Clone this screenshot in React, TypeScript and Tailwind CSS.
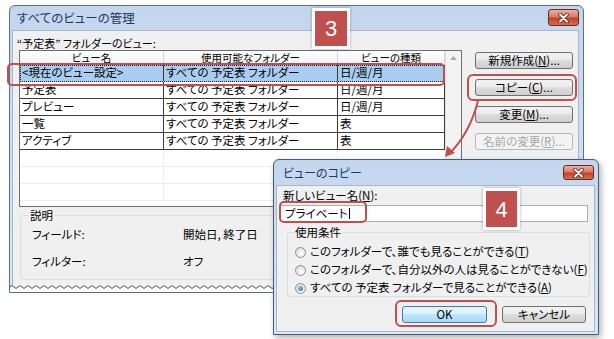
import React from 'react';

const font = "font-['Noto_Sans_CJK_JP','Noto_Sans',sans-serif] [font-feature-settings:'palt']";

const wavePath = (() => {
  let d = 'M0,4';
  for (let x = 0; x < 584; x += 8) d += ' q2,-3 4,0 q2,3 4,0';
  return d;
})();

function CloseBtn({ className }: { className: string }) {
  return (
    <div
      className={`flex items-center justify-center rounded-[3px] border border-[#6b2a1f] bg-[linear-gradient(#eab0a2_0%,#da7a62_45%,#c3422b_55%,#d56e50_100%)] ${className}`}
    >
      <svg width="13" height="10" viewBox="0 0 13 10">
        <path d="M3 1.5 L10 8.5 M10 1.5 L3 8.5" stroke="#5b2219" strokeWidth="3.6" strokeLinecap="round" />
        <path d="M3 1.5 L10 8.5 M10 1.5 L3 8.5" stroke="#fff" strokeWidth="2" strokeLinecap="round" />
      </svg>
    </div>
  );
}

function Btn({
  children,
  kind = 'normal',
  className = '',
}: {
  children: React.ReactNode;
  kind?: 'normal' | 'disabled' | 'primary';
  className?: string;
}) {
  const look =
    kind === 'disabled'
      ? 'border-[#b5b9bd] bg-[#f4f4f4] text-[#a6a6a6]'
      : kind === 'primary'
        ? 'border-[#3c7fb1] bg-[linear-gradient(#eaf6fd_0%,#d9f0fc_50%,#bee6fd_50%,#a7d9f5_100%)] text-black'
        : 'border-[#707070] bg-[linear-gradient(#f2f2f2_0%,#ebebeb_50%,#dddddd_50%,#cfcfcf_100%)] text-black';
  return (
    <div className={`flex h-[17px] items-center justify-center rounded-[3px] border text-[11.5px] leading-none ${look} ${className}`}>
      {children}
    </div>
  );
}

function Radio({ checked, children }: { checked?: boolean; children: React.ReactNode }) {
  return (
    <div className="flex h-[14px] items-center gap-[4px]">
      <div className="flex h-[11px] w-[11px] items-center justify-center rounded-full border border-[#8e8f8f] bg-[radial-gradient(circle_at_60%_65%,#ffffff,#d4d4d4)]">
        {checked && <div className="h-[5px] w-[5px] rounded-full bg-[radial-gradient(circle_at_40%_35%,#7fd0f7,#1a5a9e)]" />}
      </div>
      <span className="text-[11.5px] leading-none">{children}</span>
    </div>
  );
}

const rows = [
  { name: '<現在のビュー設定>', folder: 'すべての 予定表 フォルダー', type: '日/週/月', sel: true },
  { name: '予定表', folder: 'すべての 予定表 フォルダー', type: '日/週/月' },
  { name: 'プレビュー', folder: 'すべての 予定表 フォルダー', type: '日/週/月' },
  { name: '一覧', folder: 'すべての 予定表 フォルダー', type: '表' },
  { name: 'アクティブ', folder: 'すべての 予定表 フォルダー', type: '表' },
];

export default function App() {
  return (
    <div className={`relative h-[339px] w-[614px] overflow-hidden bg-white text-black ${font}`}>
      {/* Main dialog */}
      <div className="absolute left-[9px] top-[5px] flex h-[288px] w-[575px] flex-col overflow-hidden rounded-t-[6px] border border-[#5b6f8c] bg-[linear-gradient(#c3d6ee,#dae7f6)]">
        <div className="relative flex h-[24px] shrink-0 items-center pl-[7px]">
          <span className="text-[12.5px] text-[#1e3a5c]">すべてのビューの管理</span>
          <CloseBtn className="absolute right-[4px] top-[3px] h-[17px] w-[31px]" />
        </div>
        <div className="ml-[2px] mr-[4px] flex-1 border border-b-0 border-[#a4b7cf] bg-[#f0f0f0] pt-[5px]">
          <div className="h-[14px] pl-[4px] text-[11px] leading-[14px]">“予定表” フォルダーのビュー:</div>
          <div className="ml-[6px] flex">
            {/* List */}
            <div className="flex h-[157px] w-[443px] border border-[#6e6e6e] bg-white">
              <div className="flex w-[425px] flex-col">
                <div className="flex h-[14px] shrink-0 bg-[linear-gradient(#ffffff,#f1f2f4)] text-[10.5px] leading-[13px]">
                  <div className="flex w-[144px] items-center justify-center border-b border-r border-[#d5d5d5]">ビュー名</div>
                  <div className="flex w-[174px] items-center justify-center border-b border-r border-[#d5d5d5]">使用可能なフォルダー</div>
                  <div className="flex w-[107px] items-center justify-center border-b border-r border-[#d5d5d5]">ビューの種類</div>
                </div>
                {rows.map((r) => (
                  <div
                    key={r.name}
                    className={`flex h-[17px] shrink-0 border-b text-[11.5px] leading-none ${
                      r.sel ? 'border-dotted border-b-[#222] bg-[#a9cdf1] outline-1 outline-dotted outline-[#222] -outline-offset-1' : 'border-[#3c3c3c]'
                    }`}
                  >
                    <div className="flex w-[144px] items-center border-r border-[#3c3c3c] pl-[2px]">{r.name}</div>
                    <div className="flex w-[174px] items-center border-r border-[#3c3c3c] pl-[2px]">{r.folder}</div>
                    <div className="flex w-[107px] items-center border-r border-[#3c3c3c] pl-[2px]">{r.type}</div>
                  </div>
                ))}
                {[0, 1, 2].map((i) => (
                  <div key={i} className="flex h-[17px] shrink-0 border-b border-[#ededed]">
                    <div className="w-[144px] border-r border-[#ededed]" />
                    <div className="w-[174px] border-r border-[#ededed]" />
                    <div className="w-[107px]" />
                  </div>
                ))}
              </div>
              <div className="flex flex-1 flex-col border-l border-[#e3e3e3] bg-[#f3f3f3]">
                <div className="flex h-[14px] items-center justify-center">
                  <svg width="7" height="4" viewBox="0 0 7 4">
                    <path d="M0 4 L3.5 0 L7 4 Z" fill="#a9a9a9" />
                  </svg>
                </div>
              </div>
            </div>
            {/* Buttons */}
            <div className="ml-[13px] flex w-[98px] flex-col gap-[10px] pt-[2px]">
              <Btn>
                新規作成(<u>N</u>)...
              </Btn>
              <Btn>
                コピー(<u>C</u>)...
              </Btn>
              <Btn>
                変更(<u>M</u>)...
              </Btn>
              <Btn kind="disabled">
                名前の変更(<u>R</u>)...
              </Btn>
            </div>
          </div>
          <fieldset className="ml-[7px] mr-[5px] mt-[1px] h-[72px] rounded-[3px] border border-[#d5dfe5] pl-[11px]">
            <legend className="ml-[-4px] px-[2px] text-[11.5px] leading-[14px]">説明</legend>
            <div className="mt-[6px] flex h-[14px] items-center text-[11.5px]">
              <span className="w-[151px]">フィールド:</span>
              <span>開始日, 終了日</span>
            </div>
            <div className="mt-[13px] flex h-[14px] items-center text-[11.5px]">
              <span className="w-[151px]">フィルター:</span>
              <span>オフ</span>
            </div>
          </fieldset>
        </div>
        <svg className="absolute bottom-0 left-0" width="575" height="9" viewBox="0 0 575 9">
          <path d={`${wavePath} L584,9 L0,9 Z`} fill="#ffffff" />
          <path d={wavePath} fill="none" stroke="#3d3d3d" strokeWidth="0.9" />
        </svg>
      </div>

      {/* Copy dialog */}
      <div className="absolute left-[273px] top-[159px] flex h-[176px] w-[326px] flex-col rounded-t-[6px] border border-[#4b5a70] bg-[linear-gradient(#c3d6ee,#dae7f6)] shadow-[2px_3px_6px_rgba(0,0,0,0.3)]">
        <div className="relative flex h-[25px] shrink-0 items-center pl-[9px]">
          <span className="text-[12px] text-[#1e3a5c]">ビューのコピー</span>
          <CloseBtn className="absolute right-[4px] top-[5px] h-[15px] w-[31px]" />
        </div>
        <div className="mb-[2px] ml-[2px] mr-[3px] flex flex-1 flex-col border border-[#a4b7cf] bg-[#f0f0f0] pt-[2px]">
          <div className="h-[14px] pl-[6px] text-[11.5px] leading-[14px]">
            新しいビュー名(<u>N</u>):
          </div>
          <div className="ml-[3px] mt-[3px] flex h-[17px] w-[308px] items-center border border-[#abadb3] bg-white pl-[4px] text-[11.5px] leading-none">
            プライベート<span className="ml-[1px] h-[11px] w-px bg-black" />
          </div>
          <fieldset className="ml-[10px] mt-[3px] h-[72px] w-[303px] rounded-[3px] border border-[#d5dfe5] pl-[7px]">
            <legend className="ml-[-2px] px-[2px] text-[11.5px] leading-[14px]">使用条件</legend>
            <div className="mt-[6px] flex flex-col gap-[4px]">
              <Radio>
                このフォルダーで、誰でも見ることができる(<u>T</u>)
              </Radio>
              <Radio>
                このフォルダーで、自分以外の人は見ることができない(<u>F</u>)
              </Radio>
              <Radio checked>
                すべての 予定表 フォルダーで見ることができる(<u>A</u>)
              </Radio>
            </div>
          </fieldset>
          <div className="mt-[9px] flex justify-end gap-[15px] pr-[8px]">
            <Btn kind="primary" className="w-[85px]">
              OK
            </Btn>
            <Btn className="w-[84px]">キャンセル</Btn>
          </div>
        </div>
      </div>

      {/* Annotations */}
      <div className="absolute left-[7px] top-[63px] h-[23px] w-[438px] rounded-[5px] border-2 border-[#c0504d]" />
      <div className="absolute left-[467px] top-[74px] h-[27px] w-[110px] rounded-[6px] border-2 border-[#c0504d]" />
      <div className="absolute left-[279px] top-[201px] h-[22px] w-[88px] rounded-[5px] border-2 border-[#c0504d]" />
      <div className="absolute left-[395px] top-[300px] h-[27px] w-[102px] rounded-[6px] border-2 border-[#c0504d]" />
      <svg className="absolute left-0 top-0" width="614" height="339" viewBox="0 0 614 339">
        <path d="M478 101 Q 470 132 451 152" fill="none" stroke="#c0504d" strokeWidth="2" />
        <path d="M445 157 L447 146 L455 153 Z" fill="#c0504d" />
      </svg>
      <div className="absolute left-[312px] top-[8px] flex h-[41px] w-[38px] items-center justify-center border-[3px] border-white bg-[#c0504d] font-['Liberation_Sans',sans-serif] text-[22px] text-white shadow-[0_0_3px_rgba(0,0,0,0.3)]">
        3
      </div>
      <div className="absolute left-[483px] top-[188px] flex h-[42px] w-[37px] items-center justify-center border-[3px] border-white bg-[#c0504d] font-['Liberation_Sans',sans-serif] text-[22px] text-white shadow-[0_0_3px_rgba(0,0,0,0.3)]">
        4
      </div>
    </div>
  );
}
